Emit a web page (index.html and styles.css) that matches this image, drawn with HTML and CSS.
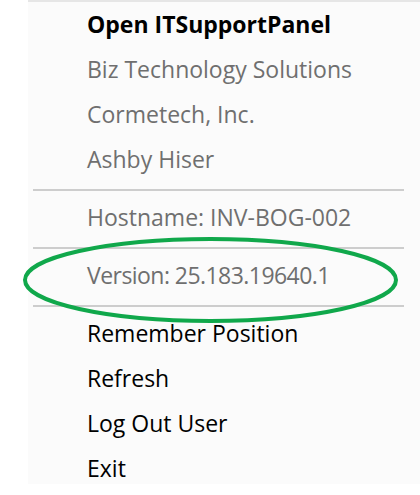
FILE: index.html
```html
<!DOCTYPE html>
<html>
<head>
<meta charset="utf-8">
<link rel="stylesheet" href="styles.css">
</head>
<body>
<div class="menu">
  <div class="item bold">Open ITSupportPanel</div>
  <div class="item dim">Biz Technology Solutions</div>
  <div class="item dim">Cormetech, Inc.</div>
  <div class="item dim">Ashby Hiser</div>
  <div class="sep"></div>
  <div class="item dim">Hostname: INV-BOG-002</div>
  <div class="sep"></div>
  <div class="item dim tight">Version: 25.183.19640.1</div>
  <div class="sep"></div>
  <div class="item">Remember Position</div>
  <div class="item">Refresh</div>
  <div class="item">Log Out User</div>
  <div class="item">Exit</div>
</div>
<svg class="ring" width="420" height="495" viewBox="0 0 420 495">
  <ellipse cx="210.5" cy="280" rx="185.5" ry="41" fill="none" stroke="#10a84b" stroke-width="4"/>
</svg>
</body>
</html>
```
FILE: styles.css
```css
html, body {
  margin: 0;
  padding: 0;
  background: #ffffff;
  width: 420px;
  height: 495px;
  overflow: hidden;
}
body {
  position: relative;
  font-family: "Open Sans", "Noto Sans", sans-serif;
  font-size: 23px;
}
.menu {
  margin-left: 28px;
  width: 400px;
  height: 482px;
  overflow: hidden;
  background: #fbfbfb;
  border-top: 2px solid #e6e6e6;
  display: flex;
  flex-direction: column;
}
.item {
  height: 45px;
  line-height: 45px;
  padding-left: 59px;
  color: #000000;
  white-space: nowrap;
  flex: none;
}
.bold {
  font-weight: 700;
}
.dim {
  color: #6f6f6f;
}
.tight {
  letter-spacing: -0.55px;
}
.sep {
  flex: none;
  height: 2px;
  margin: 7px 0 4px 5px;
  width: 371px;
  background: #cdcdcd;
}
.ring {
  position: absolute;
  left: 0;
  top: 0;
  pointer-events: none;
}
```
